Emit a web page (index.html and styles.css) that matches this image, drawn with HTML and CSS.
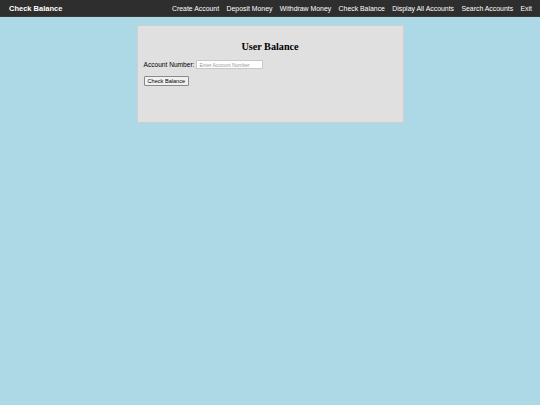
FILE: index.html
```html
<!DOCTYPE html>
<html>
<head>
<meta charset="utf-8">
<link rel="stylesheet" href="styles.css">
</head>
<body>
<nav class="navbar">
  <div class="brand">Check Balance</div>
  <div class="links">
    <a href="#">Create Account</a>
    <a href="#">Deposit Money</a>
    <a href="#">Withdraw Money</a>
    <a href="#">Check Balance</a>
    <a href="#">Display All Accounts</a>
    <a href="#">Search Accounts</a>
    <a href="#">Exit</a>
  </div>
</nav>
<main class="card">
  <h2 class="title">User Balance</h2>
  <div class="row">
    <label class="label">Account Number:</label>
    <input class="input" type="text" placeholder="Enter Account Number">
  </div>
  <button class="btn">Check Balance</button>
</main>
</body>
</html>
```
FILE: styles.css
```css
html, body { margin: 0; padding: 0; }
body {
  background: #add8e6;
  font-family: "Liberation Sans", Arial, sans-serif;
  width: 540px;
  height: 405px;
}
.navbar {
  height: 17px;
  background: #2e2e2e;
  display: flex;
  align-items: center;
  justify-content: space-between;
  padding: 0 8px 0 9px;
  border-bottom: 1px solid #3a3a3a;
  box-sizing: border-box;
}
.brand {
  color: #fff;
  font-weight: bold;
  font-size: 7.5px;
}
.links { display: flex; gap: 7.4px; }
.links a {
  color: #fff;
  text-decoration: none;
  font-size: 6.9px;
}
.card {
  width: 267px;
  height: 98px;
  margin: 8px auto 0;
  box-sizing: border-box;
  background: #e0e0e0;
  border: 1px solid #cfcfcf;
  padding: 15px 6px 0;
}
.title {
  font-family: "Liberation Serif", "Times New Roman", serif;
  font-size: 10.2px;
  font-weight: bold;
  text-align: center;
  margin: 0 0 8px;
  color: #000;
}
.row { display: flex; align-items: center; gap: 2px; }
.label { font-size: 6.6px; color: #000; }
.input {
  width: 67px;
  height: 9px;
  box-sizing: border-box;
  border: 1px solid #c8c8c8;
  background: #fff;
  font-size: 5px;
  padding: 0 2px;
  font-family: "Liberation Sans", Arial, sans-serif;
}
.input::placeholder { color: #999; }
.btn {
  margin-top: 6px;
  font-size: 5.6px;
  font-family: "Liberation Sans", Arial, sans-serif;
  height: 10px;
  padding: 0 3px;
  background: #f0f0f0;
  border: 1px solid #8a8a8a;
  border-radius: 1px;
  color: #000;
  line-height: 8px;
}
```
